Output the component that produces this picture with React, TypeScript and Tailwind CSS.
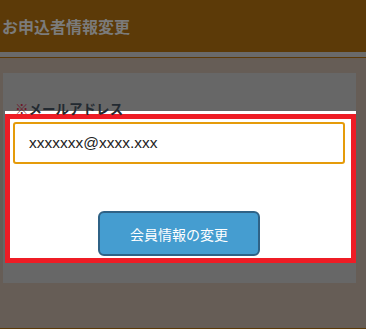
// 申込者情報変更 — メールアドレス変更（ハイライト表示）
export default function App() {
  const jp = { fontFamily: '"Noto Sans CJK JP", "Liberation Sans", sans-serif' };

  return (
    <div className="w-[366px] h-[329px] bg-[#665d56] flex flex-col overflow-hidden" style={jp}>
      {/* header */}
      <div className="h-[52px] bg-[#5c3a08] flex items-center pl-[2px]">
        <h1 className="text-[16px] font-bold text-[#7b7b7b] leading-none">お申込者情報変更</h1>
      </div>
      <div className="h-[5px] bg-[#6a6a6a]" />
      <div className="h-[1px] bg-[#5c3a08]" />

      {/* panel */}
      <div className="mt-[15px] ml-[3px] w-[353px] h-[210px] bg-[#676767] pt-[25px]">
        <div className="pl-[12px] text-[13.5px] font-semibold leading-[20px] text-[#232a31]">
          <span className="text-[#6e1526]">※</span>メールアドレス
        </div>

        <div className="-mt-[7px] ml-[2px] w-[351px] bg-white pt-[3px]">
          <div className="h-[149px] border-[5px] border-[#ee1c25] pt-[3px] pl-[3px] pr-[6px] flex flex-col">
            <div className="h-[42px] border-2 border-[#e59b0a] rounded-[3px] flex items-center pl-[14px]">
              <span className="text-[15.5px] text-[#222] leading-none" style={{ fontFamily: '"Liberation Sans", Arial, sans-serif' }}>
                xxxxxxx@xxxx.xxx
              </span>
            </div>
            <div className="flex justify-center mt-[47px]">
              <button className="w-[162px] h-[45px] rounded-[6px] border-2 border-[#2f6286] bg-[#459dd0] text-white text-[14px] leading-none">
                会員情報の変更
              </button>
            </div>
          </div>
        </div>
      </div>

      <div className="flex-1" />
      <div className="h-[1px] bg-[#5c3a08]" />
    </div>
  );
}
